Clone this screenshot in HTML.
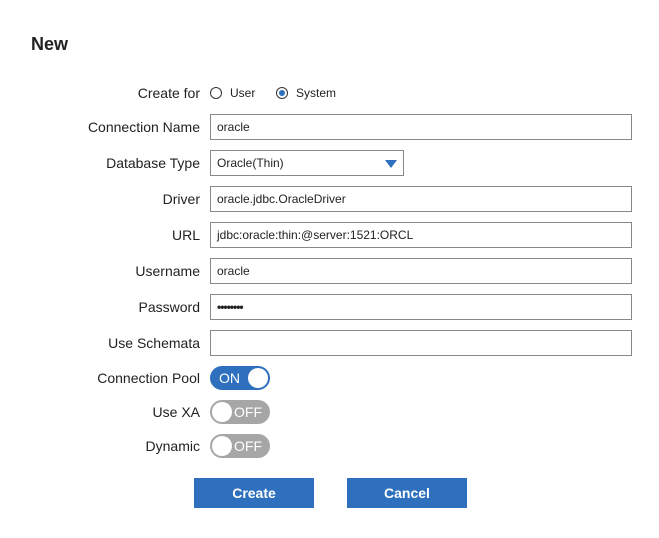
<!DOCTYPE html>
<html><head><style>
body{margin:0;width:659px;height:538px;background:#fff;font-family:"Liberation Sans",Arial,sans-serif;color:#222;position:relative;overflow:hidden}
.a{position:absolute}
h1{position:absolute;left:31px;top:34px;margin:0;font-size:18px;font-weight:bold;color:#222}
.l{position:absolute;right:459px;font-size:14px;text-align:right;white-space:nowrap}
.i{position:absolute;left:210px;height:24px;border:1px solid #888;font-size:12px;line-height:24px;padding-left:6px;box-sizing:content-box;width:414px}
.t{position:absolute;left:210px;width:60px;height:24px;border-radius:12px;font-size:14px;color:#fff;line-height:24px}
.k{position:absolute;top:2px;width:20px;height:20px;border-radius:50%;background:#fff}
.b{position:absolute;top:478px;width:120px;height:30px;background:#2e70bd;color:#fff;font-weight:bold;font-size:14px;text-align:center;line-height:30px}
.r{position:absolute;top:87px;width:10px;height:10px;border:1px solid #333;border-radius:50%}
</style></head><body>
<h1>New</h1>
<div class="l" style="top:85px">Create for</div>
<div class="r" style="left:210px"></div><div class="a" style="left:230px;top:86px;font-size:12px">User</div>
<div class="r" style="left:276px"><div class="a" style="left:2px;top:2px;width:6px;height:6px;border-radius:50%;background:#2e70bd"></div></div><div class="a" style="left:296px;top:86px;font-size:12px">System</div>
<div class="l" style="top:119px">Connection Name</div><div class="i" style="top:114px">oracle</div>
<div class="l" style="top:155px">Database Type</div><div class="i" style="top:150px;width:186px">Oracle(Thin)<div class="a" style="left:174px;top:9px;width:0;height:0;border-left:6px solid transparent;border-right:6px solid transparent;border-top:8px solid #2e70bd"></div></div>
<div class="l" style="top:191px">Driver</div><div class="i" style="top:186px">oracle.jdbc.OracleDriver</div>
<div class="l" style="top:227px">URL</div><div class="i" style="top:222px">jdbc:oracle:thin:@server:1521:ORCL</div>
<div class="l" style="top:263px">Username</div><div class="i" style="top:258px">oracle</div>
<div class="l" style="top:299px">Password</div><div class="i" style="top:294px;font-size:12px;font-weight:bold;letter-spacing:-1px">••••••••</div>
<div class="l" style="top:335px">Use Schemata</div><div class="i" style="top:330px"></div>
<div class="l" style="top:370px">Connection Pool</div>
<div class="t" style="top:366px;background:#2e70bd"><span style="position:absolute;left:9px">ON</span><div class="k" style="left:38px"></div></div>
<div class="l" style="top:404px">Use XA</div>
<div class="t" style="top:400px;background:#a6a6a6"><div class="k" style="left:2px"></div><span style="position:absolute;left:24px">OFF</span></div>
<div class="l" style="top:438px">Dynamic</div>
<div class="t" style="top:434px;background:#a6a6a6"><div class="k" style="left:2px"></div><span style="position:absolute;left:24px">OFF</span></div>
<div class="b" style="left:194px">Create</div>
<div class="b" style="left:347px">Cancel</div>
</body></html>
